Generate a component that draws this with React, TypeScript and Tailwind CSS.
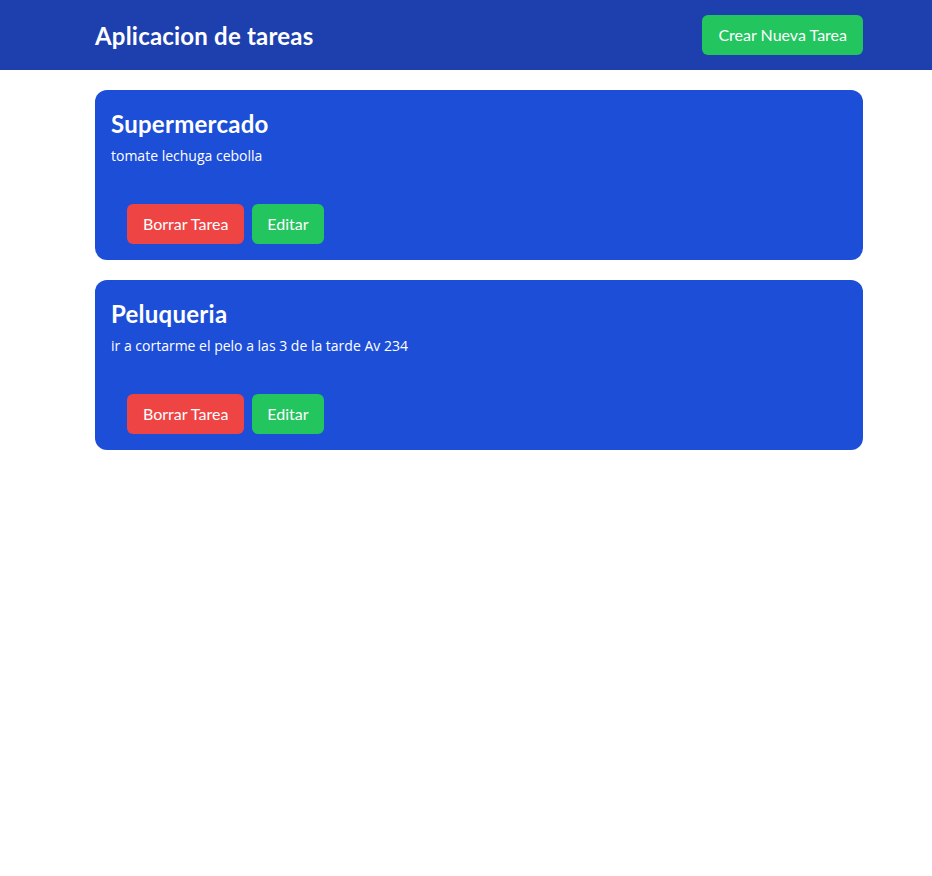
import React from "react";

type Tarea = { id: number; titulo: string; descripcion: string };

const tareas: Tarea[] = [
  { id: 1, titulo: "Supermercado", descripcion: "tomate lechuga cebolla" },
  { id: 2, titulo: "Peluqueria", descripcion: "ir a cortarme el pelo a las 3 de la tarde Av 234" },
];

export default function App() {
  return (
    <div className="min-h-screen bg-white font-['Lato',sans-serif] text-white">
      <header className="bg-[#1e40af] h-[70px] pl-[26px]">
        <div className="max-w-3xl mx-auto h-full flex items-center justify-between">
          <h1 className="text-2xl font-bold tracking-[0.2px] mt-0.5">Aplicacion de tareas</h1>
          <button className="bg-[#22c55e] px-4 py-2 rounded-md text-base">Crear Nueva Tarea</button>
        </div>
      </header>

      <main className="pl-[26px]">
        <div className="max-w-3xl mx-auto">
          {tareas.map((t) => (
            <div key={t.id} className="bg-[#1d4ed8] rounded-xl p-4 mt-5">
              <h2 className="text-2xl font-bold tracking-[0.25px] mt-0.5">{t.titulo}</h2>
              <p className="text-sm mt-1.5 font-['Open_Sans',sans-serif]">{t.descripcion}</p>
              <div className="flex gap-2 pl-4 mt-[38px]">
                <button className="bg-[#ef4444] px-4 py-2 rounded-md">Borrar Tarea</button>
                <button className="bg-[#22c55e] px-[15px] py-2 rounded-md">Editar</button>
              </div>
            </div>
          ))}
        </div>
      </main>
    </div>
  );
}
